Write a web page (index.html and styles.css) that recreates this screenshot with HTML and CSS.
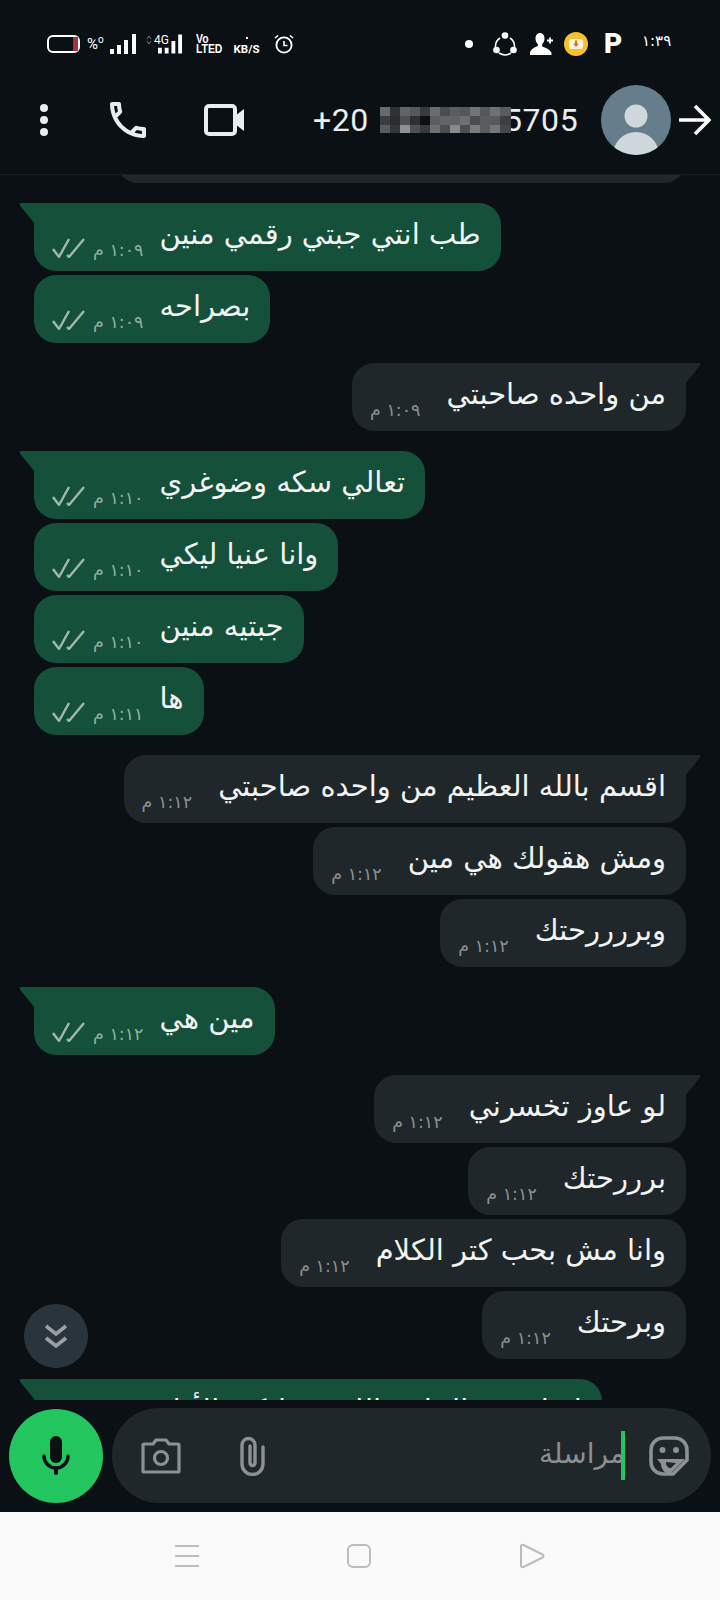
FILE: index.html
```html
<!DOCTYPE html>
<html lang="ar">
<head>
    <meta charset="UTF-8">
    <meta name="viewport" content="width=device-width, initial-scale=1.0">
    <title>Chat</title>
    <link rel="stylesheet" href="styles.css">
</head>
<body>
    <svg class="defs">
        <symbol id="ticks" viewBox="0 0 33 20">
            <path d="M1 11l6 8L17 1M15 17l2 2L32 1" fill="none" stroke="currentColor" stroke-width="2.4"/>
        </symbol>
    </svg>

    <div class="phone">
        <div class="status-bar">
            <div class="status-group">
                <svg class="ic-battery" viewBox="0 0 34 18"><rect x="2" y="1" width="31" height="16" rx="5" fill="none" stroke="#fff" stroke-width="2"/><rect x="27" y="2" width="5" height="14" fill="#a3333a"/></svg>
                <span class="ic-percent">%<sup>o</sup></span>
                <svg class="ic-signal" viewBox="0 0 26 20"><path d="M0 15h4v5H0zM7 11h4v9H7zM14 6h4v14h-4zM22 0h4v20h-4z" fill="#fff"/></svg>
                <div class="ic-net">
                    <svg class="net-arrows" viewBox="0 0 6 10"><path d="M1 4l2-3 2 3M1 6l2 3 2-3" fill="none" stroke="#777" stroke-width="1"/></svg>
                    <span class="net-label">4G</span>
                    <svg class="net-bars" viewBox="0 0 26 20"><path d="M0 14h4v6H0zM7 14h4v6H7zM14 7h4v13h-4zM21 0h4v20h-4z" fill="#fff"/></svg>
                </div>
                <div class="ic-volte">Vo<br>LTED</div>
                <div class="ic-speed"><i></i><span>KB/S</span></div>
                <svg class="ic-alarm" viewBox="0 0 20 20"><circle cx="10" cy="11" r="7.6" fill="none" stroke="#fff" stroke-width="1.8"/><path d="M10 7v4.500h3.500M1 4l3-2.500M19 4l-3-2.500" fill="none" stroke="#fff" stroke-width="1.6"/></svg>
            </div>
            <div class="status-group">
                <i class="ic-dot"></i>
                <svg class="ic-share" viewBox="0 0 24 24"><path d="M7 6a10 10 0 0 0-4.500 9M17 6a10 10 0 0 1 4.500 9M6 21a11 11 0 0 0 12 0" fill="none" stroke="#fff" stroke-width="1.500"/><circle cx="12" cy="3.500" r="3.300" fill="#fff"/><circle cx="3.500" cy="18" r="3.300" fill="#fff"/><circle cx="20.500" cy="18" r="3.300" fill="#fff"/></svg>
                <svg class="ic-person" viewBox="0 0 24 24"><path d="M10 1c3 0 4.500 2.500 4.500 5.500 0 2.500-1 4.500-2.300 5.500v2.500c3 1 7.800 2.500 9.300 6.500V23H0v-2.500c1.500-4 5-5.500 7.800-6.500V12C6.500 11 5.500 9 5.500 6.500 5.500 3.500 7 1 10 1z" fill="#fff"/><path d="M17 8.500h6M20 5.500v6" stroke="#fff" stroke-width="1.800"/></svg>
                <svg class="ic-yellow" viewBox="0 0 24 24"><circle cx="12" cy="12" r="12" fill="#fbc02d"/><rect x="5" y="7" width="14" height="10" rx="2" fill="#fff6d8"/><path d="M11 8.500h2v3h2L12 15l-3-3.500h2z" fill="#e8692c"/></svg>
                <span class="ic-p">P</span>
                <span class="status-time">١:٣٩</span>
            </div>
        </div>

        <div class="header">
            <div class="menu-dots"><i></i><i></i><i></i></div>
            <svg class="ic-call" viewBox="3 3 18 18"><path d="M6.540 5c.060.890.210 1.760.450 2.590l-1.200 1.200c-.410-1.200-.670-2.470-.760-3.790h1.510m9.860 12.020c.850.240 1.720.390 2.600.450v1.490c-1.320-.090-2.590-.350-3.800-.750l1.200-1.190M7.500 3H4c-.550 0-1 .450-1 1 0 9.390 7.610 17 17 17 .550 0 1-.450 1-1v-3.490c0-.550-.450-1-1-1-1.240 0-2.450-.200-3.570-.570-.100-.040-.210-.050-.310-.050-.260 0-.510.100-.710.290l-2.200 2.200c-2.830-1.450-5.150-3.760-6.590-6.590l2.200-2.200c.280-.280.360-.670.250-1.020C8.700 6.450 8.500 5.250 8.500 4c0-.550-.45-1-1-1z" fill="#e9edef"/></svg>
            <svg class="ic-video" viewBox="0 0 40 32"><rect x="2" y="2" width="29" height="28" rx="3" fill="none" stroke="#e9edef" stroke-width="4"/><path d="M31 12l9-7v22l-9-7z" fill="#e9edef"/></svg>
            <div class="phone-number">
                <span>+20</span>
                <svg class="mosaic" viewBox="0 0 131 26" shape-rendering="crispEdges">
                    <rect width="131" height="26" fill="#55575a"/>
                    <rect x="0" y="0" width="10" height="9" fill="#6a6a6a"/><rect x="10" y="0" width="10" height="9" fill="#2f3235"/><rect x="20" y="0" width="10" height="9" fill="#636466"/><rect x="30" y="0" width="10" height="9" fill="#56585a"/><rect x="40" y="0" width="10" height="9" fill="#383b3e"/><rect x="50" y="0" width="10" height="9" fill="#6a6b6c"/><rect x="60" y="0" width="10" height="9" fill="#4a4c4e"/><rect x="70" y="0" width="10" height="9" fill="#5a5c5e"/><rect x="80" y="0" width="10" height="9" fill="#545657"/><rect x="90" y="0" width="10" height="9" fill="#737475"/><rect x="100" y="0" width="10" height="9" fill="#56585a"/><rect x="110" y="0" width="10" height="9" fill="#707172"/><rect x="120" y="0" width="11" height="9" fill="#5a5b5c"/>
                    <rect x="0" y="9" width="10" height="9" fill="#3a3c3f"/><rect x="10" y="9" width="10" height="9" fill="#2a2d30"/><rect x="20" y="9" width="10" height="9" fill="#4e5053"/><rect x="30" y="9" width="10" height="9" fill="#2d3033"/><rect x="40" y="9" width="10" height="9" fill="#0c0e12"/><rect x="50" y="9" width="10" height="9" fill="#5c5d5f"/><rect x="60" y="9" width="10" height="9" fill="#636466"/><rect x="70" y="9" width="10" height="9" fill="#606264"/><rect x="80" y="9" width="10" height="9" fill="#6e6f70"/><rect x="90" y="9" width="10" height="9" fill="#4a4c4e"/><rect x="100" y="9" width="10" height="9" fill="#5a5c5d"/><rect x="110" y="9" width="10" height="9" fill="#585a5b"/><rect x="120" y="9" width="11" height="9" fill="#3c3f41"/>
                    <rect x="0" y="18" width="10" height="8" fill="#5a5b5d"/><rect x="10" y="18" width="10" height="8" fill="#33363a"/><rect x="20" y="18" width="10" height="8" fill="#909193"/><rect x="30" y="18" width="10" height="8" fill="#4e5053"/><rect x="40" y="18" width="10" height="8" fill="#38393c"/><rect x="50" y="18" width="10" height="8" fill="#6e6f71"/><rect x="60" y="18" width="10" height="8" fill="#4c4e50"/><rect x="70" y="18" width="10" height="8" fill="#88898a"/><rect x="80" y="18" width="10" height="8" fill="#4c4e50"/><rect x="90" y="18" width="10" height="8" fill="#7a7b7c"/><rect x="100" y="18" width="10" height="8" fill="#5a5c5d"/><rect x="110" y="18" width="10" height="8" fill="#757677"/><rect x="120" y="18" width="11" height="8" fill="#45484a"/>
                </svg>
                <span>5705</span>
            </div>
            <svg class="avatar" viewBox="0 0 70 70"><defs><clipPath id="avatar-clip"><circle cx="35" cy="35" r="35"/></clipPath></defs><circle cx="35" cy="35" r="35" fill="#667d8b"/><circle cx="35" cy="31" r="11.500" fill="#cfd8dc"/><ellipse cx="35" cy="70" rx="23" ry="23" fill="#cfd8dc" clip-path="url(#avatar-clip)"/></svg>
            <svg class="ic-back" viewBox="0 0 32 32"><path d="M0 16h30M16 2l14 14-14 14" fill="none" stroke="#fff" stroke-width="3.600"/></svg>
        </div>

        <div class="chat">
            <div class="messages">
                <div class="bubble in cut"></div>

                <div class="group">
                    <div class="bubble out first"><span class="text">طب انتي جبتي رقمي منين</span><span class="meta"><span class="time">١:٠٩ م</span><svg class="tick"><use href="#ticks"/></svg></span></div>
                    <div class="bubble out"><span class="text">بصراحه</span><span class="meta"><span class="time">١:٠٩ م</span><svg class="tick"><use href="#ticks"/></svg></span></div>
                </div>

                <div class="group">
                    <div class="bubble in first"><span class="text">من واحده صاحبتي</span><span class="meta"><span class="time">١:٠٩ م</span></span></div>
                </div>

                <div class="group">
                    <div class="bubble out first"><span class="text">تعالي سكه وضوغري</span><span class="meta"><span class="time">١:١٠ م</span><svg class="tick"><use href="#ticks"/></svg></span></div>
                    <div class="bubble out"><span class="text">وانا عنيا ليكي</span><span class="meta"><span class="time">١:١٠ م</span><svg class="tick"><use href="#ticks"/></svg></span></div>
                    <div class="bubble out"><span class="text">جبتيه منين</span><span class="meta"><span class="time">١:١٠ م</span><svg class="tick"><use href="#ticks"/></svg></span></div>
                    <div class="bubble out"><span class="text">ها</span><span class="meta"><span class="time">١:١١ م</span><svg class="tick"><use href="#ticks"/></svg></span></div>
                </div>

                <div class="group">
                    <div class="bubble in first"><span class="text">اقسم بالله العظيم من واحده صاحبتي</span><span class="meta"><span class="time">١:١٢ م</span></span></div>
                    <div class="bubble in"><span class="text">ومش هقولك هي مين</span><span class="meta"><span class="time">١:١٢ م</span></span></div>
                    <div class="bubble in"><span class="text">وبررررحتك</span><span class="meta"><span class="time">١:١٢ م</span></span></div>
                </div>

                <div class="group">
                    <div class="bubble out first"><span class="text">مين هي</span><span class="meta"><span class="time">١:١٢ م</span><svg class="tick"><use href="#ticks"/></svg></span></div>
                </div>

                <div class="group">
                    <div class="bubble in first"><span class="text">لو عاوز تخسرني</span><span class="meta"><span class="time">١:١٢ م</span></span></div>
                    <div class="bubble in"><span class="text">برررحتك</span><span class="meta"><span class="time">١:١٢ م</span></span></div>
                    <div class="bubble in"><span class="text">وانا مش بحب كتر الكلام</span><span class="meta"><span class="time">١:١٢ م</span></span></div>
                    <div class="bubble in"><span class="text">وبرحتك</span><span class="meta"><span class="time">١:١٢ م</span></span></div>
                </div>

                <div class="group">
                    <div class="bubble out first"><span class="text">لو اعرف الحاجه اللي مخليكي الأول</span><span class="meta"><span class="time">١:١٢ م</span><svg class="tick"><use href="#ticks"/></svg></span></div>
                </div>
            </div>

            <div class="scroll-down">
                <svg viewBox="0 0 24 26"><path d="M2 3l10 8 10-8M2 15l10 8 10-8" fill="none" stroke="#9aa1a6" stroke-width="3.600"/></svg>
            </div>
        </div>

        <div class="composer">
            <div class="mic-button">
                <svg viewBox="0 0 30 40"><rect x="9" y="0" width="12" height="27" rx="6" fill="#0b1014"/><path d="M3 20a12 12 0 0 0 24 0" fill="none" stroke="#0b1014" stroke-width="3.400" stroke-linecap="round"/><path d="M15 32v5" stroke="#0b1014" stroke-width="4" stroke-linecap="round"/></svg>
            </div>
            <div class="input-pill">
                <div class="input-left">
                    <svg class="ic-camera" viewBox="0 0 40 36"><path d="M12 6l3-4h10l3 4h9a1 1 0 0 1 1 1v26a1 1 0 0 1-1 1H3a1 1 0 0 1-1-1V7a1 1 0 0 1 1-1z" fill="none" stroke="#8b9195" stroke-width="3.200" stroke-linejoin="round"/><circle cx="20" cy="20" r="6.500" fill="none" stroke="#8b9195" stroke-width="3.200"/></svg>
                    <svg class="ic-clip" viewBox="0 0 26 40"><path d="M24 11v17a10.500 10.500 0 0 1-21 0V9a6.500 6.500 0 0 1 13 0v18a2.500 2.500 0 0 1-5 0V10" fill="none" stroke="#8b9195" stroke-width="3.400" stroke-linecap="round"/></svg>
                </div>
                <div class="input-right">
                    <div class="input-field"><span class="placeholder">مراسلة</span><i class="caret"></i></div>
                    <svg class="ic-sticker" viewBox="0 0 40 40"><path d="M14 2h12a12 12 0 0 1 12 12v10L24 38H14A12 12 0 0 1 2 26V14A12 12 0 0 1 14 2z" fill="none" stroke="#8b9195" stroke-width="3.600" stroke-linejoin="round"/><circle cx="13.500" cy="14" r="3" fill="#8b9195"/><circle cx="27" cy="14" r="3" fill="#8b9195"/><path d="M8 23h28L24 35l-3 3c-5 0-9-5-9-10z" fill="#8b9195"/><path d="M17 26c0 4 2 6 5 6l5-5z" fill="#1f272a"/></svg>
                </div>
            </div>
        </div>

        <div class="nav-bar">
            <svg viewBox="0 0 24 24"><path d="M0 2h24M0 12h24M0 22h24" stroke="#bcbcbc" stroke-width="2"/></svg>
            <svg viewBox="0 0 24 24"><rect x="1" y="1" width="22" height="22" rx="5" fill="none" stroke="#bcbcbc" stroke-width="2"/></svg>
            <svg class="nav-back" viewBox="0 0 26 26"><path d="M2 3.500c0-1.500 1.300-2.200 2.500-1.500l19 9.500c1.300.7 1.300 2.300 0 3l-19 9.500c-1.200.7-2.500 0-2.500-1.500z" fill="none" stroke="#bcbcbc" stroke-width="2"/></svg>
        </div>
    </div>
</body>
</html>
```

FILE: styles.css
```css
* {
    box-sizing: border-box;
}

body {
    margin: 0;
    background: #0b1014;
    font-family: "DejaVu Sans", sans-serif;
}

.defs {
    display: none;
}

.phone {
    width: 720px;
    height: 1600px;
    display: flex;
    flex-direction: column;
    background: #0b1014;
    overflow: hidden;
}

/* status bar */
.status-bar {
    height: 70px;
    flex-shrink: 0;
    padding: 18px 48px 0 46px;
    display: flex;
    justify-content: space-between;
    align-items: center;
    color: #fff;
}

.status-group {
    display: flex;
    align-items: center;
}

.ic-battery {
    width: 34px;
    height: 18px;
}

.ic-percent {
    width: 17px;
    margin-left: 7px;
    font: 15px/18px Roboto, sans-serif;
}

.ic-percent sup {
    font-size: 10px;
    line-height: 0;
}

.ic-signal {
    width: 26px;
    height: 20px;
    margin-left: 6px;
}

.ic-net {
    position: relative;
    width: 37px;
    height: 20px;
    margin-left: 10px;
}

.net-arrows {
    position: absolute;
    left: 0;
    top: 1px;
    width: 6px;
    height: 10px;
}

.net-label {
    position: absolute;
    left: 8px;
    top: 0;
    font: 12px/12px Roboto, sans-serif;
}

.net-bars {
    position: absolute;
    right: 0;
    top: 0;
    width: 25px;
    height: 20px;
}

.ic-volte {
    width: 24px;
    margin-left: 13px;
    font: 700 13px/10px "Liberation Sans", sans-serif;
    transform: scaleX(0.8);
    transform-origin: left;
}

.ic-speed {
    width: 27px;
    margin-left: 13px;
    display: flex;
    flex-direction: column;
    align-items: center;
    font: 700 11.500px/11px Roboto, sans-serif;
    padding-top: 3px;
}

.ic-speed i {
    width: 2px;
    height: 2px;
    margin-bottom: 5px;
    background: #fff;
}

.ic-alarm {
    width: 20px;
    height: 20px;
    margin-left: 14px;
}

.ic-dot {
    width: 8px;
    height: 8px;
    border-radius: 50%;
    background: #fff;
}

.ic-share {
    width: 24px;
    height: 24px;
    margin-left: 20px;
}

.ic-person {
    width: 24px;
    height: 24px;
    margin-left: 13px;
}

.ic-yellow {
    width: 24px;
    height: 24px;
    margin-left: 10px;
}

.ic-p {
    width: 16px;
    margin-left: 16px;
    font: 900 28px/24px Roboto, sans-serif;
}

.status-time {
    width: 30px;
    margin-left: 22px;
    font-size: 15px;
    line-height: 20px;
    margin-top: -6px;
}

/* header */
.header {
    height: 105px;
    flex-shrink: 0;
    padding: 0 0 4px 40px;
    display: flex;
    align-items: center;
    border-bottom: 1px solid #171e22;
}

.menu-dots {
    width: 8px;
    display: flex;
    flex-direction: column;
    gap: 4px;
}

.menu-dots i {
    width: 8px;
    height: 8px;
    border-radius: 50%;
    background: #e9edef;
}

.ic-call {
    width: 36px;
    height: 36px;
    margin-left: 62px;
}

.ic-video {
    width: 40px;
    height: 32px;
    margin-left: 58px;
}

.phone-number {
    width: 262px;
    margin-left: 69px;
    display: flex;
    align-items: center;
    color: #e9edef;
    font: 32px/40px Roboto, sans-serif;
    letter-spacing: 0.6px;
}

.mosaic {
    width: 131px;
    height: 26px;
    margin: 0 -7px 0 11px;
    position: relative;
    z-index: 1;
    flex-shrink: 0;
}

.avatar {
    width: 70px;
    height: 70px;
    margin-left: 26px;
}

.ic-back {
    width: 32px;
    height: 32px;
    margin-left: 8px;
}

/* chat */
.chat {
    flex: 1;
    position: relative;
    overflow: hidden;
}

.messages {
    display: flex;
    flex-direction: column;
    gap: 20px;
    padding-left: 34px;
    padding-right: 34px;
}

.group {
    display: flex;
    flex-direction: column;
    gap: 4px;
}

.bubble {
    position: relative;
    height: 68px;
    padding: 9px 20px 0 18px;
    display: flex;
    justify-content: space-between;
    width: fit-content;
    direction: rtl;
    border-radius: 22px;
    color: #f1f4f3;
    font-size: 29px;
    line-height: 44px;
    white-space: nowrap;
}

.bubble.out {
    align-self: flex-start;
    background: #15503a;
}

.bubble.in {
    align-self: flex-end;
    background: #1f272a;
}

.bubble.cut {
    width: 570px;
    margin-top: -60px;
}

.bubble.first.out {
    border-top-left-radius: 0;
}

.bubble.first.in {
    border-top-right-radius: 0;
}

/* the little tail on the first bubble of a group */
.bubble.first::before {
    content: "";
    position: absolute;
    top: 0;
    width: 15px;
    height: 21px;
    background: inherit;
}

.bubble.first.out::before {
    left: -14px;
    clip-path: polygon(0 0, 100% 0, 100% 100%, 0 12%);
}

.bubble.first.in::before {
    right: -14px;
    clip-path: polygon(0 0, 100% 0, 100% 12%, 0 100%);
}

.meta {
    display: flex;
    gap: 8px;
    margin-right: 16px;
    height: 24px;
    margin-top: 26px;
    font-size: 17.500px;
    line-height: 24px;
}

.bubble.in .meta {
    margin-right: 26px;
    color: #8b9195;
}

.bubble.out .meta {
    color: #8fb09f;
}

.tick {
    width: 33px;
    height: 20px;
    color: #9fbaac;
}

.scroll-down {
    position: absolute;
    left: 24px;
    top: 1129px;
    width: 64px;
    height: 64px;
    border-radius: 50%;
    background: #2a343c;
    display: flex;
    align-items: center;
    justify-content: center;
}

.scroll-down svg {
    width: 24px;
    height: 26px;
}

/* composer */
.composer {
    flex-shrink: 0;
    padding: 8px 9px 9px;
    display: flex;
    gap: 9px;
}

.mic-button {
    width: 94px;
    height: 94px;
    margin-top: 1px;
    flex-shrink: 0;
    border-radius: 50%;
    background: #22c55e;
    display: flex;
    align-items: center;
    justify-content: center;
}

.mic-button svg {
    width: 30px;
    height: 40px;
}

.input-pill {
    flex: 1;
    height: 95px;
    padding: 0 22px 0 29px;
    border-radius: 47px;
    background: #1f272a;
    display: flex;
    align-items: center;
    justify-content: space-between;
}

.input-left,
.input-right {
    display: flex;
    align-items: center;
}

.ic-camera {
    width: 40px;
    height: 36px;
}

.ic-clip {
    width: 26px;
    height: 40px;
    margin-left: 58px;
}

.input-field {
    position: relative;
    height: 49px;
    direction: rtl;
    color: #8a8f92;
    font-size: 28px;
    line-height: 46px;
}

.caret {
    position: absolute;
    right: 0;
    top: 0;
    width: 4px;
    height: 49px;
    background: #22c55e;
}

.ic-sticker {
    width: 40px;
    height: 40px;
    margin-left: 24px;
}

/* android nav bar */
.nav-bar {
    height: 88px;
    flex-shrink: 0;
    background: #fafafa;
    display: flex;
    align-items: center;
    justify-content: center;
    gap: 148px;
}

.nav-bar svg {
    width: 24px;
    height: 24px;
}

.nav-bar .nav-back {
    width: 26px;
    height: 26px;
}
```
